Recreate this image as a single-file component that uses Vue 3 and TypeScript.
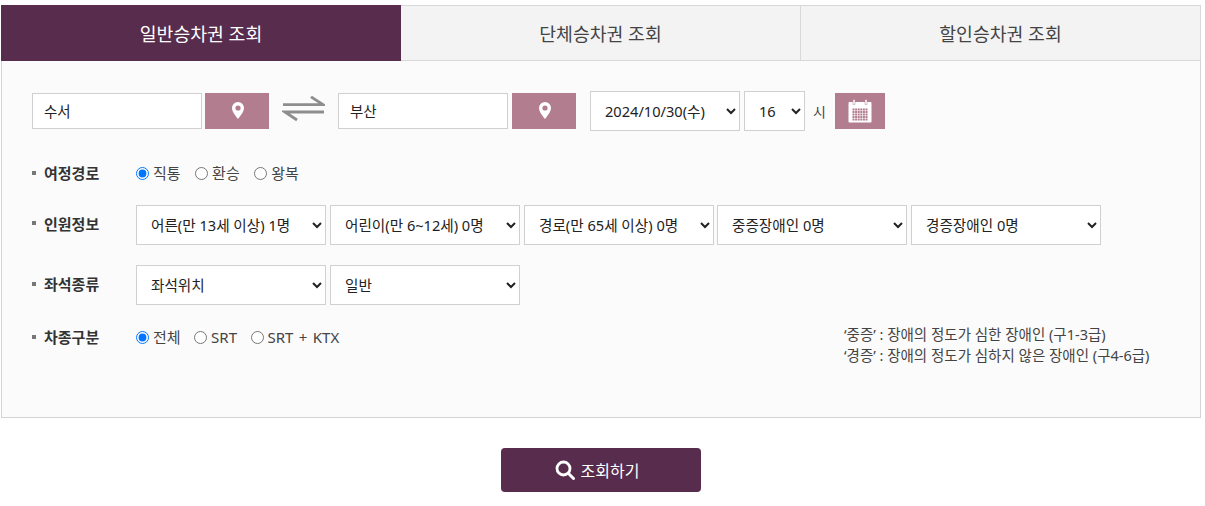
<script setup lang="ts">
const tabs = ['일반승차권 조회', '단체승차권 조회', '할인승차권 조회']
const paxOptions = ['어른(만 13세 이상) 1명', '어린이(만 6~12세) 0명', '경로(만 65세 이상) 0명', '중증장애인 0명', '경증장애인 0명']
const seatOptions = ['좌석위치', '일반']
const routes = ['직통', '환승', '왕복']
const trains = ['전체', 'SRT', 'SRT + KTX']
const cells = Array.from({ length: 30 }, (_, i) => ({ x: 4.5 + (i % 6) * 2.6, y: 9.5 + Math.floor(i / 6) * 2.5 }))
</script>

<template>
  <div class="page">
    <div class="panel">
      <div class="tabs">
        <div v-for="(t, i) in tabs" :key="t" class="tab" :class="{ active: i === 0 }">{{ t }}</div>
      </div>
      <div class="body">
        <div class="route-row">
          <input class="station" value="수서" />
          <button class="pin-btn" type="button" aria-label="출발역">
            <svg width="12" height="17" viewBox="0 0 12 17"><path fill="#fff" fill-rule="evenodd" d="M6 0a6 6 0 0 1 6 6c0 3.6-4 8.500-6 11C4 14.500 0 9.600 0 6a6 6 0 0 1 6-6Zm0 3.400a2.600 2.600 0 1 0 0 5.200 2.600 2.600 0 0 0 0-5.200Z"/></svg>
          </button>
          <svg class="swap" width="43" height="30" viewBox="0 0 43 30"><path fill="none" stroke="#8e8e8e" stroke-width="2.800" d="M1 8.700h40L29 .8M42 16H3l12 8"/></svg>
          <input class="station" value="부산" />
          <button class="pin-btn" type="button" aria-label="도착역">
            <svg width="12" height="17" viewBox="0 0 12 17"><path fill="#fff" fill-rule="evenodd" d="M6 0a6 6 0 0 1 6 6c0 3.6-4 8.500-6 11C4 14.500 0 9.600 0 6a6 6 0 0 1 6-6Zm0 3.400a2.600 2.600 0 1 0 0 5.200 2.600 2.600 0 0 0 0-5.200Z"/></svg>
          </button>
          <select class="sel date"><option>2024/10/30(수)</option></select>
          <select class="sel hour"><option>16</option></select>
          <span class="hour-label">시</span>
          <button class="cal-btn" type="button" aria-label="달력">
            <svg width="24" height="24" viewBox="0 0 24 24">
              <rect x="0.500" y="3" width="23" height="20.500" rx="1" fill="#fff"/>
              <rect x="5" y="0.500" width="2" height="5" fill="#fff" stroke="#b27d8f" stroke-width="0.500"/>
              <rect x="17" y="0.500" width="2" height="5" fill="#fff" stroke="#b27d8f" stroke-width="0.500"/>
              <rect v-for="(c, i) in cells" :key="i" :x="c.x" :y="c.y" width="2" height="2" fill="#b27d8f"/>
            </svg>
          </button>
        </div>

        <div class="row r-route">
          <div class="label">여정경로</div>
          <div class="radios">
            <label v-for="(r, i) in routes" :key="r" class="radio"><input type="radio" name="route" :checked="i === 0" />{{ r }}</label>
          </div>
        </div>

        <div class="row r-pax">
          <div class="label">인원정보</div>
          <div class="selects">
            <select v-for="p in paxOptions" :key="p" class="sel wide"><option>{{ p }}</option></select>
          </div>
        </div>

        <div class="row r-seat">
          <div class="label">좌석종류</div>
          <div class="selects">
            <select v-for="s in seatOptions" :key="s" class="sel wide"><option>{{ s }}</option></select>
          </div>
        </div>

        <div class="row r-train">
          <div class="label">차종구분</div>
          <div class="radios">
            <label v-for="(r, i) in trains" :key="r" class="radio"><input type="radio" name="train" :checked="i === 0" />{{ r }}</label>
          </div>
          <div class="note">
            <div>‘중증’ : 장애의 정도가 심한 장애인 (구1-3급)</div>
            <div>‘경증’ : 장애의 정도가 심하지 않은 장애인 (구4-6급)</div>
          </div>
        </div>
      </div>
    </div>
    <div class="submit-wrap">
      <button class="submit" type="button">
        <svg width="20" height="20" viewBox="0 0 20 20"><circle cx="8.500" cy="8.500" r="6.500" fill="none" stroke="#fff" stroke-width="2.800"/><path d="M13.500 13.500 18.500 18.500" stroke="#fff" stroke-width="3" stroke-linecap="round"/></svg>
        조회하기
      </button>
    </div>
  </div>
</template>

<style>
html, body { margin: 0; background: #fff; }
</style>

<style scoped>
.page {
  width: 1205px;
  height: 506px;
  padding: 5px 4px 0 1px;
  box-sizing: border-box;
  font-family: "Noto Sans", "Noto Sans CJK KR", sans-serif;
  color: #333;
  font-size: 14px;
  overflow: hidden;
}
.panel {
  height: 413px;
  box-sizing: border-box;
  border: 1px solid #d4d4d4;
  border-top: 0;
  background: #fbfbfb;
}
.tabs { display: flex; height: 56px; margin-left: -1px; margin-right: -1px; }
.tab {
  flex: 0 0 400px;
  box-sizing: border-box;
  display: flex;
  align-items: center;
  justify-content: center;
  background: #f3f3f3;
  color: #444;
  font-size: 18.300px;
  padding-bottom: 1px;
  border-top: 1px solid #d8d8d8;
  border-bottom: 1px solid #d8d8d8;
  border-right: 1px solid #d8d8d8;
}
.tab:last-child { flex: 1 1 auto; }
.tab.active { background: #582c4d; color: #fff; border: 0; }
.body { padding: 30px 0 0 30px; }
.route-row { display: flex; align-items: center; height: 40px; }
.station {
  width: 170px;
  height: 36px;
  box-sizing: border-box;
  border: 1px solid #d0d0d0;
  background: #fff;
  padding: 0 11px 2px 11px;
  font: inherit;
  font-size: 14.500px;
  color: #222;
  outline: none;
}
.pin-btn, .cal-btn {
  height: 36px;
  border: 0;
  padding: 0;
  background: #b27d8f;
  display: flex;
  align-items: center;
  justify-content: center;
}
.pin-btn { width: 64px; margin-left: 3px; }
.route-row .pin-btn + .swap { margin: 0 13px; }
.route-row .pin-btn:nth-of-type(2) { margin-left: 4px; margin-right: 14px; }
.pin-btn svg { margin: -1px 0 0 1px; }
.swap { flex: none; }
.sel {
  height: 40px;
  box-sizing: border-box;
  border: 1px solid #d0d0d0;
  border-radius: 0;
  background: #fff;
  font: inherit;
  font-size: 14.600px;
  color: #222;
  padding: 0 0 0 10px;
  outline: none;
}
.date { width: 150px; }
.hour { width: 61px; margin-left: 4px; }
.hour-label { margin: 0 8px; color: #444; font-size: 14px; }
.cal-btn { width: 50px; margin-left: 1px; }
.row { display: flex; align-items: center; position: relative; }
.label {
  flex: 0 0 104px;
  box-sizing: border-box;
  padding-left: 12px;
  font-weight: 700;
  color: #333;
  position: relative;
  font-size: 15px;
}
.label::before {
  content: "";
  position: absolute;
  left: 0;
  top: 50%;
  width: 4px;
  height: 4px;
  margin-top: -2px;
  background: #777;
}
.r-route { margin-top: 30px; height: 24px; }
.r-route .label { margin-top: -1px; }
.r-pax { margin-top: 20px; height: 40px; }
.r-pax .label { margin-top: -4px; }
.r-seat { margin-top: 20px; height: 40px; }
.r-seat .label { margin-top: -3px; }
.r-train { margin-top: 20px; height: 24px; }
.r-train .label { margin-top: -1px; }
.radios { display: flex; gap: 14px; }
.r-route .radios { gap: 14.500px; }
.r-train .radios { gap: 13.500px; }
.radio { display: flex; align-items: center; color: #444; font-size: 15px; line-height: 20px; white-space: pre; word-spacing: 1.500px; }
.radio input { margin: 0 4px 0 0; width: 13px; height: 13px; }
.selects { display: flex; gap: 4px; }
.selects .sel { padding-left: 10px; }
.wide { width: 190px; }
.selects .sel:nth-child(4) { margin-left: -1px; }
.note {
  position: absolute;
  left: 812px;
  top: -1px;
  font-size: 14.500px;
  line-height: 21px;
  color: #444;
  white-space: nowrap;
}
.submit-wrap { display: flex; justify-content: center; margin-top: 30px; padding-right: 0; }
.submit {
  width: 200px;
  height: 44px;
  border: 0;
  border-radius: 4px;
  background: #582c4d;
  color: #fff;
  font: inherit;
  font-size: 16px;
  padding: 0 3px 0 0;
  display: flex;
  align-items: center;
  justify-content: center;
  gap: 6px;
}
.submit svg { margin-left: -5px; }
</style>
